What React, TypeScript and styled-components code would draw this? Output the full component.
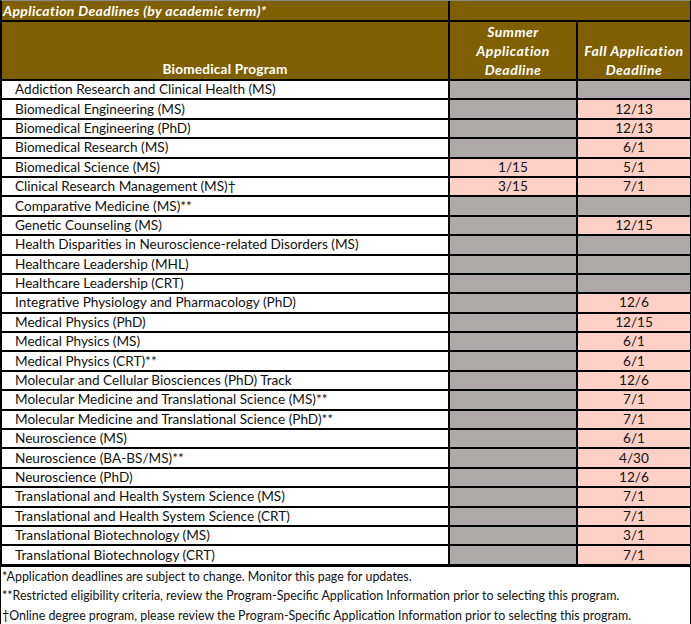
import React from "react";
import styled, { createGlobalStyle } from "styled-components";

const GlobalStyle = createGlobalStyle`
  html, body {
    margin: 0;
    padding: 0;
    background: #ffffff;
  }
  body {
    font-family: Lato, "Liberation Sans", sans-serif;
    color: #111111;
  }
`;

const BROWN = "#7f6000";
const GRAY = "#aeaaaa";
const PINK = "#ffd0c6";

type Row = [string, string | null, string | null];

const rows: Row[] = [
  ["Addiction Research and Clinical Health (MS)", null, null],
  ["Biomedical Engineering (MS)", null, "12/13"],
  ["Biomedical Engineering (PhD)", null, "12/13"],
  ["Biomedical Research (MS)", null, "6/1"],
  ["Biomedical Science (MS)", "1/15", "5/1"],
  ["Clinical Research Management (MS)†", "3/15", "7/1"],
  ["Comparative Medicine (MS)**", null, null],
  ["Genetic Counseling (MS)", null, "12/15"],
  ["Health Disparities in Neuroscience-related Disorders (MS)", null, null],
  ["Healthcare Leadership (MHL)", null, null],
  ["Healthcare Leadership (CRT)", null, null],
  ["Integrative Physiology and Pharmacology (PhD)", null, "12/6"],
  ["Medical Physics (PhD)", null, "12/15"],
  ["Medical Physics (MS)", null, "6/1"],
  ["Medical Physics (CRT)**", null, "6/1"],
  ["Molecular and Cellular Biosciences (PhD) Track", null, "12/6"],
  ["Molecular Medicine and Translational Science (MS)**", null, "7/1"],
  ["Molecular Medicine and Translational Science (PhD)**", null, "7/1"],
  ["Neuroscience (MS)", null, "6/1"],
  ["Neuroscience (BA-BS/MS)**", null, "4/30"],
  ["Neuroscience (PhD)", null, "12/6"],
  ["Translational and Health System Science (MS)", null, "7/1"],
  ["Translational and Health System Science (CRT)", null, "7/1"],
  ["Translational Biotechnology (MS)", null, "3/1"],
  ["Translational Biotechnology (CRT)", null, "7/1"],
];

const notes = [
  "*Application deadlines are subject to change. Monitor this page for updates.",
  "**Restricted eligibility criteria, review the Program-Specific Application Information prior to selecting this program.",
  "†Online degree program, please review the Program-Specific Application Information prior to selecting this program.",
];

const Sheet = styled.div`
  width: 691px;
  box-sizing: border-box;
`;

const Grid = styled.div`
  display: grid;
  grid-template-columns: 446px 126px 112px;
  grid-template-rows: 19px 57px;
  grid-auto-rows: 17.4px;
  column-gap: 2px;
  row-gap: 2px;
  background: #000000;
  border-top: 1px solid #8a8a8a;
  border-left: 2px solid #000000;
  border-right: 1px solid #000000;
  border-bottom: 3px solid #000000;
  font-size: 13.6px;
`;

const TitleCell = styled.div<{ $span?: number }>`
  grid-column: span ${(p) => p.$span ?? 1};
  background: ${BROWN};
  color: #ffffff;
  font-size: 14px;
  font-weight: 700;
  font-style: italic;
  letter-spacing: 0.35px;
  display: flex;
  align-items: center;
  padding-left: 1px;
  white-space: nowrap;
`;

const HeadCell = styled.div<{ $italic?: boolean }>`
  background: ${BROWN};
  color: #ffffff;
  font-weight: 700;
  font-style: ${(p) => (p.$italic ? "italic" : "normal")};
  letter-spacing: ${(p) => (p.$italic ? "0.5px" : "0.2px")};
  font-size: ${(p) => (p.$italic ? "14px" : "13.6px")};
  display: flex;
  align-items: flex-end;
  justify-content: center;
  text-align: center;
  line-height: 19px;
`;

const ProgramCell = styled.div`
  background: #ffffff;
  display: flex;
  align-items: center;
  padding-left: 13px;
  white-space: nowrap;
  line-height: 17px;
`;

const DateCell = styled.div<{ $filled: boolean }>`
  background: ${(p) => (p.$filled ? PINK : GRAY)};
  display: flex;
  align-items: center;
  justify-content: center;
  line-height: 17px;
`;

const Notes = styled.div`
  border-left: 1px solid #000000;
  border-right: 1px solid #000000;
  border-bottom: 1px solid #000000;
  padding: 0 0 0 1px;
  font-size: 12.4px;
`;

const Note = styled.div`
  height: 19.4px;
  line-height: 19.4px;
  white-space: nowrap;
`;

export default function App() {
  return (
    <>
      <GlobalStyle />
      <Sheet>
        <Grid>
          <TitleCell>Application Deadlines (by academic term)*</TitleCell>
          <TitleCell $span={2} />
          <HeadCell>Biomedical Program</HeadCell>
          <HeadCell $italic>
            Summer
            <br />
            Application
            <br />
            Deadline
          </HeadCell>
          <HeadCell $italic>
            Fall Application
            <br />
            Deadline
          </HeadCell>
          {rows.map(([name, summer, fall]) => (
            <React.Fragment key={name}>
              <ProgramCell>{name}</ProgramCell>
              <DateCell $filled={summer !== null}>{summer}</DateCell>
              <DateCell $filled={fall !== null}>{fall}</DateCell>
            </React.Fragment>
          ))}
        </Grid>
        <Notes>
          {notes.map((n) => (
            <Note key={n}>{n}</Note>
          ))}
        </Notes>
      </Sheet>
    </>
  );
}
